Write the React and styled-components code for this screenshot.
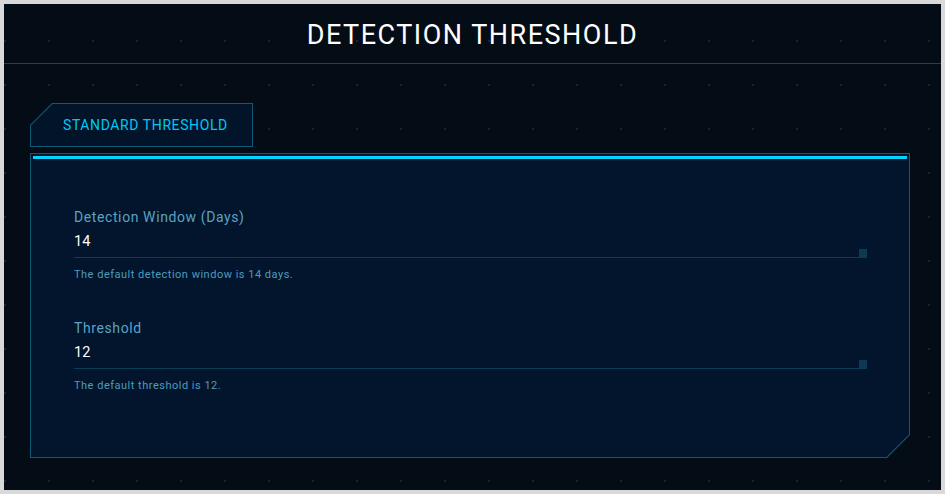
import React from 'react'
import styled, { createGlobalStyle } from 'styled-components'

const GlobalStyle = createGlobalStyle`
  html, body {
    margin: 0;
    padding: 0;
    background: #d9d9d9;
  }
  body {
    font-family: Roboto, "Liberation Sans", sans-serif;
  }
`

const fields = [
  { label: 'Detection Window (Days)', value: '14', hint: 'The default detection window is 14 days.' },
  { label: 'Threshold', value: '12', hint: 'The default threshold is 12.' },
]

function App() {
  return (
    <>
      <GlobalStyle />
      <Page>
        <Frame>
          <Header>
            <h1>DETECTION THRESHOLD</h1>
          </Header>
          <Content>
            <Tab>STANDARD THRESHOLD</Tab>
            <Panel>
              <AccentBar />
              <Fields>
                {fields.map(f => (
                  <Field key={f.label}>
                    <Label>{f.label}</Label>
                    <InputRow>
                      <Value>{f.value}</Value>
                      <Handle />
                    </InputRow>
                    <Hint>{f.hint}</Hint>
                  </Field>
                ))}
              </Fields>
            </Panel>
          </Content>
        </Frame>
      </Page>
    </>
  )
}

const Page = styled.div`
  padding: 4px;
  width: 945px;
  height: 494px;
  box-sizing: border-box;
`

const Frame = styled.div`
  width: 937px;
  height: 486px;
  box-sizing: border-box;
  background-color: #040c16;
  background-image: radial-gradient(circle, #1a2330 0.9px, transparent 1.3px);
  background-size: 44px 44px;
  background-position: -21px 15px;
  display: flex;
  flex-direction: column;
`

const Header = styled.div`
  height: 60px;
  box-sizing: border-box;
  border-bottom: 1px solid #0c4863;
  display: flex;
  align-items: center;
  justify-content: center;

  h1 {
    margin: 0;
    padding-top: 3px;
    color: #ffffff;
    font-size: 27px;
    font-weight: 400;
    letter-spacing: 1.5px;
  }
`

const Content = styled.div`
  padding: 39px 0 0 26px;
  display: flex;
  flex-direction: column;
  gap: 6px;
`

const Tab = styled.div`
  position: relative;
  width: 223px;
  height: 44px;
  box-sizing: border-box;
  padding-left: 33px;
  display: flex;
  align-items: center;
  color: #00c8f4;
  font-size: 14px;
  letter-spacing: 0.6px;
  z-index: 0;

  &::before,
  &::after {
    content: '';
    position: absolute;
    z-index: -1;
  }
  &::before {
    inset: 0;
    background: #0d5a78;
    clip-path: polygon(22px 0, 100% 0, 100% 100%, 0 100%, 0 22px);
  }
  &::after {
    inset: 1px;
    background: #02142a;
    clip-path: polygon(21.6px 0, 100% 0, 100% 100%, 0 100%, 0 21.6px);
  }
`

const Panel = styled.div`
  position: relative;
  width: 880px;
  height: 305px;
  box-sizing: border-box;
  padding: 3px 3px 0 3px;
  z-index: 0;

  &::before,
  &::after {
    content: '';
    position: absolute;
    z-index: -1;
  }
  &::before {
    inset: 0;
    background: #0d5a78;
    clip-path: polygon(0 0, 100% 0, 100% calc(100% - 23px), calc(100% - 23px) 100%, 0 100%);
  }
  &::after {
    inset: 1px;
    background: #02152c;
    clip-path: polygon(0 0, 100% 0, 100% calc(100% - 22.6px), calc(100% - 22.6px) 100%, 0 100%);
  }
`

const AccentBar = styled.div`
  height: 3px;
  background: #00d4ff;
`

const Fields = styled.div`
  padding: 49px 40px 0 41px;
  display: flex;
  flex-direction: column;
  gap: 37px;
`

const Field = styled.div`
  display: flex;
  flex-direction: column;
`

const Label = styled.div`
  color: #5aa3c4;
  font-size: 14px;
  line-height: 18px;
  letter-spacing: 0.6px;
`

const InputRow = styled.div`
  display: flex;
  align-items: flex-end;
  margin-top: 6px;
`

const Value = styled.div`
  flex: 1;
  color: #ffffff;
  font-size: 14.5px;
  line-height: 20px;
  padding-bottom: 5px;
  border-bottom: 1px solid #0b3d55;
`

const Handle = styled.div`
  width: 8px;
  height: 9px;
  background: #0b3a52;
`

const Hint = styled.div`
  margin-top: 10px;
  color: #4f9cbd;
  font-size: 11px;
  line-height: 14px;
  letter-spacing: 0.5px;
`

export default App
